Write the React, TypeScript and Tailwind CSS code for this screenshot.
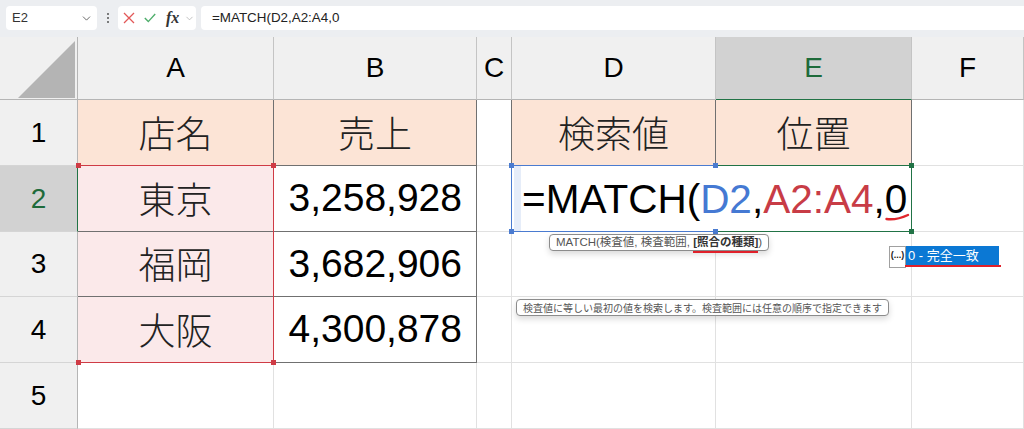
import { ChevronDown } from 'lucide-react'

const SANS = "font-['Liberation_Sans','Noto_Sans_CJK_JP',sans-serif]"
const JP = "font-['Noto_Sans_CJK_JP',sans-serif]"

type Cell = {
  text?: string
  bg?: string
  kind?: 'jp' | 'num'
  r: string
  b: string
}

const D = 'border-r-[#707070]'
const DB = 'border-b-[#707070]'
const L = 'border-r-[#e1e1e1]'
const LB = 'border-b-[#e1e1e1]'

const rows: Cell[][] = [
  [
    { text: '店名', bg: 'bg-[#fce4d6]', kind: 'jp', r: D, b: DB },
    { text: '売上', bg: 'bg-[#fce4d6]', kind: 'jp', r: D, b: DB },
    { r: D, b: LB },
    { text: '検索値', bg: 'bg-[#fce4d6]', kind: 'jp', r: D, b: DB },
    { text: '位置', bg: 'bg-[#fce4d6]', kind: 'jp', r: D, b: 'border-b-[#217346]' },
    { r: L, b: LB },
  ],
  [
    { text: '東京', bg: 'bg-[#fbe9ea]', kind: 'jp', r: D, b: DB },
    { text: '3,258,928', kind: 'num', r: D, b: DB },
    { r: L, b: LB },
    { r: 'border-r-white', b: LB },
    { r: L, b: LB },
    { r: L, b: LB },
  ],
  [
    { text: '福岡', bg: 'bg-[#fbe9ea]', kind: 'jp', r: D, b: DB },
    { text: '3,682,906', kind: 'num', r: D, b: DB },
    { r: L, b: LB },
    { r: L, b: LB },
    { r: L, b: LB },
    { r: L, b: LB },
  ],
  [
    { text: '大阪', bg: 'bg-[#fbe9ea]', kind: 'jp', r: D, b: DB },
    { text: '4,300,878', kind: 'num', r: D, b: DB },
    { r: L, b: LB },
    { r: L, b: LB },
    { r: L, b: LB },
    { r: L, b: LB },
  ],
  [
    { r: L, b: LB },
    { r: L, b: LB },
    { r: L, b: LB },
    { r: L, b: LB },
    { r: L, b: LB },
    { r: L, b: LB },
  ],
]

const cols = ['A', 'B', 'C', 'D', 'E', 'F']

function Handle({ className }: { className: string }) {
  return <span className={`absolute w-[5px] h-[5px] ${className}`} />
}

function Toolbar() {
  return (
    <div className={`h-[37px] bg-[#eceef1] flex items-start pt-[6px] pl-[6px] gap-[5px] ${SANS}`}>
      <div className="w-[91px] h-[24px] bg-white rounded-[4px] flex items-center pl-[6px] pr-[4px] justify-between">
        <span className="text-[13px] text-[#333]">E2</span>
        <ChevronDown size={13} strokeWidth={1.6} className="text-[#555]" />
      </div>
      <div className="w-[11px] h-[24px] flex flex-col items-center justify-center gap-[2px]">
        <span className="w-[2px] h-[2px] bg-[#555] rounded-full" />
        <span className="w-[2px] h-[2px] bg-[#555] rounded-full" />
        <span className="w-[2px] h-[2px] bg-[#555] rounded-full" />
      </div>
      <div className="w-[78px] h-[24px] bg-white rounded-[4px] flex items-center pl-[5px]">
        <svg width="12" height="12" viewBox="0 0 12 12">
          <path d="M1 1 L11 11 M11 1 L1 11" stroke="#e25858" strokeWidth="1.3" fill="none" />
        </svg>
        <svg className="ml-[9px]" width="12" height="10" viewBox="0 0 12 10">
          <path d="M0.8 5 L4.3 8.6 L11.2 1" stroke="#4fae6c" strokeWidth="1.4" fill="none" />
        </svg>
        <span className="ml-[10px] font-['Liberation_Serif',serif] italic font-bold text-[16px] text-[#333] leading-none">fx</span>
        <ChevronDown size={11} strokeWidth={1.3} className="ml-[5px] text-[#999]" />
      </div>
      <div className="flex-1 h-[24px] bg-white rounded-l-[4px] flex items-center pl-[11px]">
        <span className="text-[13.4px] text-[#222]">=MATCH(D2,A2:A4,0</span>
      </div>
    </div>
  )
}

export default function App() {
  return (
    <div className="relative w-[1024px] h-[429px] overflow-hidden bg-white">
      <Toolbar />
      <div className={`grid grid-cols-[78px_196px_203px_35px_204px_196px_112px] grid-rows-[63px_66px_66px_65px_66px_66px] ${SANS}`}>
        <div className="bg-[#f0f0f0] border-r border-b border-r-[#b5b5b5] border-b-[#b5b5b5] relative">
          <svg className="absolute left-[18px] top-[4px]" width="58" height="58" viewBox="0 0 58 58">
            <polygon points="0,57 57,0 57,57" fill="#b4b4b4" />
          </svg>
        </div>
        {cols.map(c => (
          <div
            key={c}
            className={`flex items-center justify-center text-[28px] border-r border-b border-r-[#c4c4c4] ${
              c === 'E' ? 'bg-[#d2d2d2] text-[#1e6b3a] border-b-[#217346]' : 'bg-[#f0f0f0] text-black border-b-[#b5b5b5]'
            }`}
          >
            {c}
          </div>
        ))}
        {rows.map((row, i) => (
          <>
            <div
              key={`h${i}`}
              className={`flex items-center justify-center text-[28px] border-r border-b border-b-[#d5d5d5] ${
                i === 1 ? 'bg-[#d2d2d2] text-[#1e6b3a] border-r-[#217346]' : 'bg-[#f0f0f0] text-black border-r-[#b5b5b5]'
              }`}
            >
              {i + 1}
            </div>
            {row.map((cell, j) => (
              <div
                key={`${i}-${j}`}
                className={`flex items-center border-r border-b ${cell.r} ${cell.b} ${cell.bg ?? 'bg-white'} ${
                  cell.kind === 'num' ? 'justify-end pr-[14px] text-[39px] text-black' : 'justify-center'
                } ${cell.kind === 'jp' ? `${JP} font-light text-[37px] text-[#222]` : ''}`}
              >
                {cell.text}
              </div>
            ))}
          </>
        ))}
      </div>

      {/* reference highlight A2:A4 */}
      <div className="absolute left-[78px] top-[165px] w-[196px] h-[198px] border border-l-0 border-[#cf3b45]">
        <Handle className="bg-[#cf3b45] -left-[2px] -top-[3px]" />
        <Handle className="bg-[#cf3b45] -right-[3px] -top-[3px]" />
        <Handle className="bg-[#cf3b45] -left-[2px] -bottom-[3px]" />
        <Handle className="bg-[#cf3b45] -right-[3px] -bottom-[3px]" />
      </div>

      {/* active cell editing */}
      <div className="absolute left-[716px] top-[165px] w-[196px] h-[67px] border border-l-0 border-[#217346]">
        <Handle className="bg-[#217346] -right-[3px] -top-[3px]" />
        <Handle className="bg-[#217346] -right-[3px] -bottom-[3px]" />
      </div>
      <div className="absolute left-[511px] top-[165px] w-[205px] h-[67px] border border-r-0 border-[#4a7bd0]">
        <span className="absolute left-[2px] top-0 bottom-0 w-[7px] bg-[#e6edf9]" />
        <Handle className="bg-[#4a7bd0] -left-[3px] -top-[3px]" />
        <Handle className="bg-[#4a7bd0] -right-[2px] -top-[3px]" />
        <Handle className="bg-[#4a7bd0] -left-[3px] -bottom-[3px]" />
        <Handle className="bg-[#4a7bd0] -right-[2px] -bottom-[3px]" />
      </div>
      <div className={`absolute left-[522px] top-[166px] h-[66px] flex items-center text-[40.5px] text-black whitespace-nowrap ${SANS}`}>
        <span>=MATCH(</span>
        <span className="text-[#4579d3]">D2</span>
        <span>,</span>
        <span className="text-[#c83c46]">A2:A4</span>
        <span>,0</span>
      </div>
      <svg className="absolute left-[884px] top-[211px]" width="28" height="12" viewBox="0 0 28 12">
        <path d="M2.5 8 Q 12 9.5 24 4" stroke="#e0262c" strokeWidth="2.4" fill="none" strokeLinecap="round" />
      </svg>

      {/* argument tooltip */}
      <div className={`absolute left-[549px] top-[234px] h-[17px] px-[6px] flex items-center bg-white border border-[#8c8c8c] rounded-[4px] shadow-[0_3px_6px_rgba(0,0,0,0.15)] text-[11.5px] text-[#555] whitespace-nowrap ${SANS}`}>
        MATCH(検査値, 検査範囲,&nbsp;
        <span className="relative font-bold text-[#333]">
          [照合の種類]
          <span className="absolute left-0 right-0 -bottom-[2px] h-[2px] bg-[#e0202a]" />
        </span>
        )
      </div>

      {/* autocomplete list */}
      <div className={`absolute left-[889px] top-[246px] w-[17px] h-[22px] bg-white border border-[#a0a0a0] flex items-start justify-center pt-[2px] text-[9px] font-bold text-[#222] ${SANS}`}>
        (...)
      </div>
      <div className={`absolute left-[906px] top-[246px] w-[93px] h-[20px] bg-[#0b78d4] flex items-center pl-[2px] text-[13px] text-white whitespace-nowrap ${SANS}`}>
        0 - 完全一致
      </div>
      <span className="absolute left-[905px] top-[265px] w-[96px] h-[2px] bg-[#e0202a]" />

      {/* description tooltip */}
      <div className={`absolute left-[516px] top-[299px] w-[373px] h-[17px] px-[6px] flex items-center bg-white border border-[#8c8c8c] rounded-[4px] shadow-[0_3px_6px_rgba(0,0,0,0.15)] text-[10px] text-[#555] whitespace-nowrap ${JP}`}>
        検査値に等しい最初の値を検索します。検査範囲には任意の順序で指定できます
      </div>
    </div>
  )
}
